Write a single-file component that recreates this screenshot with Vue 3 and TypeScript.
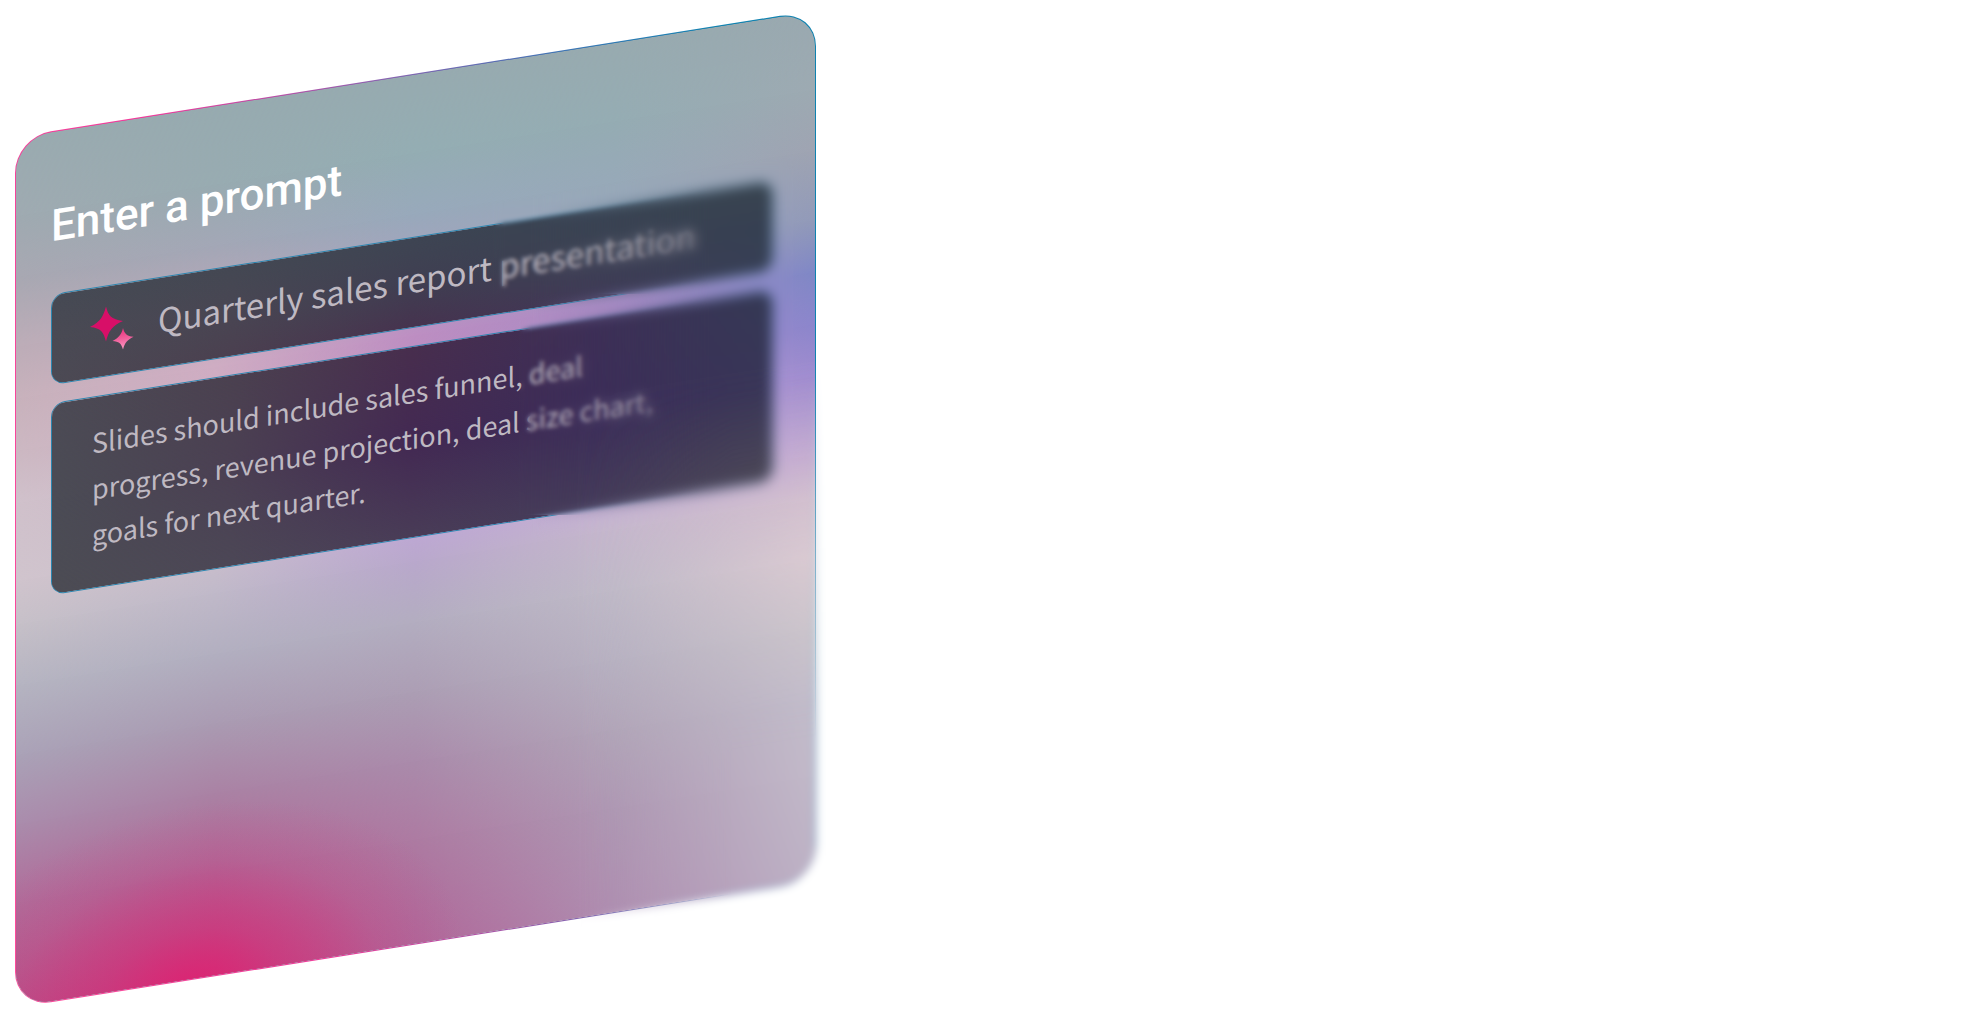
<script setup lang="ts">
import { ref } from 'vue'

const topic = ref('Quarterly sales report presentation')
const details = ref(
  'Slides should include sales funnel, deal\nprogress, revenue projection, deal size chart,\ngoals for next quarter.'
)

interface MeshRow {
  at: number
  colors: string[]
}

// Each row is a horizontal gradient that fades in between the row above and its own position.
function meshLayers(rows: MeshRow[]) {
  return rows.map((row, i) => {
    const mask =
      i === 0 ? 'none' : `linear-gradient(to bottom, transparent ${rows[i - 1].at}%, #000 ${row.at}%)`
    return {
      background: `linear-gradient(to right, ${row.colors.join(', ')})`,
      maskImage: mask
    }
  })
}

const surface = meshLayers([
  { at: 0, colors: ['#9aabb0', '#97abb0', '#97abb0', '#98abb0', '#9aa9b0'] },
  { at: 9, colors: ['#9faab1', '#98abb1', '#94adb3', '#95acb3', '#9daab2'] },
  { at: 16, colors: ['#a8a8b2', '#a3a7b6', '#98a9bb', '#97a9b8', '#9fa4b2'] },
  { at: 24, colors: ['#bdadb8', '#bda8ba', '#aba1c0', '#98a2bc', '#929ab9'] },
  { at: 30, colors: ['#c8b2bc', '#cfadc3', '#bd8ec2', '#a88bc4', '#8088c6'] },
  { at: 36, colors: ['#ccb8c2', '#cfadc3', '#bd8ec2', '#a88bc4', '#8c86cc'] },
  { at: 42, colors: ['#d0c1cb', '#cdb7c8', '#c0a4d0', '#b89ccf', '#a08ccf'] },
  { at: 51, colors: ['#d0c4cd', '#ccbfcd', '#c0a7d8', '#c4abd7', '#c5add0'] },
  { at: 56, colors: ['#c6c0c8', '#c0b9c9', '#b9a8cc', '#c5b7cc', '#d3c0cf'] },
  { at: 63, colors: ['#b5b4c1', '#b2afc0', '#b3adc0', '#bfb9c7', '#dacad2'] },
  { at: 71, colors: ['#aaa2b7', '#aa9bb2', '#ac9eb4', '#b7b1c1', '#ccc5cc'] },
  { at: 79, colors: ['#aa8cac', '#aa82a4', '#aa8bab', '#b1a5b8', '#c3bdcb'] },
  { at: 88, colors: ['#b06d9a', '#b26595', '#ad7ba2', '#ae98b3', '#c2b9c9'] },
  { at: 100, colors: ['#b95088', '#c44481', '#b06799', '#ae8eb0', '#bdb2c5'] }
])

const topicFill = meshLayers([
  { at: 0, colors: ['#464a54', '#444853', '#3e4553', '#384352', '#3a4550'] },
  { at: 50, colors: ['#4a4a54', '#494653', '#403f52', '#3b4153', '#364052'] },
  { at: 100, colors: ['#4c4a54', '#4b4050', '#46334f', '#403a57', '#374056'] }
])

const detailsFill = meshLayers([
  { at: 0, colors: ['#4c4b55', '#4b4150', '#482e4e', '#3d2f56', '#353a55'] },
  { at: 50, colors: ['#4b4c55', '#4b4053', '#432953', '#3b2c58', '#393658'] },
  { at: 100, colors: ['#4c4c54', '#4c4756', '#493c57', '#443b59', '#4c4856'] }
])
</script>

<template>
  <main class="page">
    <section class="card">
      <div class="mesh surface" aria-hidden="true">
        <div v-for="(layer, i) in surface" :key="i" class="layer" :style="layer"></div>
        <div class="glow"></div>
      </div>

      <div class="content">
        <label class="title" for="topic">Enter a prompt</label>

        <div class="fields">
          <div class="field topic">
            <div class="mesh" aria-hidden="true">
              <div v-for="(layer, i) in topicFill" :key="i" class="layer" :style="layer"></div>
            </div>
            <svg class="sparkle" viewBox="0 0 44 46" aria-hidden="true">
              <defs>
                <linearGradient id="spark" x1="0" y1="0" x2="0" y2="1">
                  <stop offset="0" stop-color="#e8307c" />
                  <stop offset="0.5" stop-color="#f0609c" />
                  <stop offset="1" stop-color="#ff9cc4" />
                </linearGradient>
              </defs>
              <path
                fill="#d80f68"
                d="M16 0C18 9 21 14 33 17C22 20 18.500 25 16 35C13.500 25 11 21 0 18C11 14 13.500 9 16 0Z"
              />
              <path
                fill="url(#spark)"
                d="M33 24C34.500 30 36.500 32.500 43.500 34.500C37 37 35 39 33 45.500C31 39 29 37 22.500 35.500C29 33 31.500 30 33 24Z"
              />
            </svg>
            <input id="topic" v-model="topic" type="text" spellcheck="false" />
          </div>

          <div class="field details">
            <div class="mesh" aria-hidden="true">
              <div v-for="(layer, i) in detailsFill" :key="i" class="layer" :style="layer"></div>
            </div>
            <textarea
              id="details"
              v-model="details"
              rows="3"
              spellcheck="false"
              aria-label="Prompt details"
            ></textarea>
          </div>

          <div class="haze haze-topic" aria-hidden="true"></div>
          <div class="haze haze-details" aria-hidden="true"></div>
          <div class="haze haze-deep" aria-hidden="true"></div>
        </div>
      </div>

      <div class="edge-haze" aria-hidden="true"></div>
    </section>
  </main>
</template>

<style>
body {
  background: #fff;
}
</style>

<style scoped>
.page {
  box-sizing: border-box;
  min-height: 100vh;
  padding: 137px 15px 10px;
  overflow: hidden;
  font-family: 'Noto Sans CJK SC', 'Noto Sans', sans-serif;
}

.card {
  position: relative;
  box-sizing: border-box;
  width: 41.1%;
  min-width: 720px;
  aspect-ratio: 802 / 872;
  padding: 1px;
  border-radius: 36px;
  background: linear-gradient(78deg, #ff4c9c 0%, #f03a9a 32%, #8a62b0 56%, #3f74b4 74%, #0f82b0 90%);
  transform: skewY(-9deg);
  transform-origin: 0 0;
}

.mesh {
  position: absolute;
  inset: 0;
  overflow: hidden;
  border-radius: inherit;
}

.surface {
  inset: 1px;
  border-radius: 35px;
}

.layer,
.glow {
  position: absolute;
  inset: 0;
}

.glow {
  background: radial-gradient(
    ellipse 34% 21% at 22% 101%,
    rgba(224, 30, 112, 0.85) 0%,
    rgba(216, 36, 116, 0.45) 32%,
    rgba(206, 50, 124, 0.14) 68%,
    rgba(190, 80, 140, 0) 100%
  );
}

.content {
  position: relative;
  display: flex;
  flex-direction: column;
  gap: 40px;
  padding: 66px 42px 0 35px;
}

.title {
  color: #fff;
  font-family: Roboto, sans-serif;
  font-size: 44px;
  font-weight: 500;
  line-height: 56px;
}

.fields {
  position: relative;
  display: flex;
  flex-direction: column;
  gap: 18px;
}

.field {
  position: relative;
  box-sizing: border-box;
  border: 1px solid #2a86b0;
  border-radius: 14px;
}

.field .mesh {
  border-radius: 13px;
}

.topic {
  display: flex;
  align-items: center;
  gap: 24px;
  height: 91px;
  padding: 0 38px 4px;
}

.sparkle {
  position: relative;
  flex: none;
  width: 44px;
  height: 46px;
}

input,
textarea {
  position: relative;
  display: block;
  flex: 1;
  box-sizing: border-box;
  width: 100%;
  min-width: 0;
  margin: 0;
  padding: 0;
  border: 0;
  outline: 0;
  background: none;
  color: #bfb9c2;
  font-family: inherit;
  font-weight: 400;
}

input {
  height: 60px;
  padding-bottom: 4px;
  font-size: 33px;
}

textarea {
  height: 138px;
  overflow: hidden;
  resize: none;
  font-size: 27px;
  line-height: 46px;
  white-space: pre;
}

.details {
  padding: 22px 40px 30px;
}

/* The fields drift out of focus towards the right. */
.haze {
  position: absolute;
  right: -20px;
  pointer-events: none;
}

.haze-topic {
  top: -20px;
  left: 442px;
  height: 120px;
  backdrop-filter: blur(2px);
  mask-image: linear-gradient(to right, transparent 0, #000 12px);
}

.haze-details {
  top: 100px;
  bottom: -20px;
  left: 468px;
  backdrop-filter: blur(2px);
  mask-image: linear-gradient(to right, transparent 0, #000 12px);
}

.haze-deep {
  top: -20px;
  bottom: -20px;
  left: 480px;
  backdrop-filter: blur(6px);
  mask-image: linear-gradient(to right, transparent 0, #000 180px);
}

.edge-haze {
  position: absolute;
  top: 40%;
  right: -20px;
  bottom: -20px;
  left: 70%;
  pointer-events: none;
  backdrop-filter: blur(4px);
  mask-image: linear-gradient(to bottom, transparent 0, #000 70%),
    linear-gradient(to right, transparent 0, #000 60%);
  mask-composite: intersect;
}
</style>
